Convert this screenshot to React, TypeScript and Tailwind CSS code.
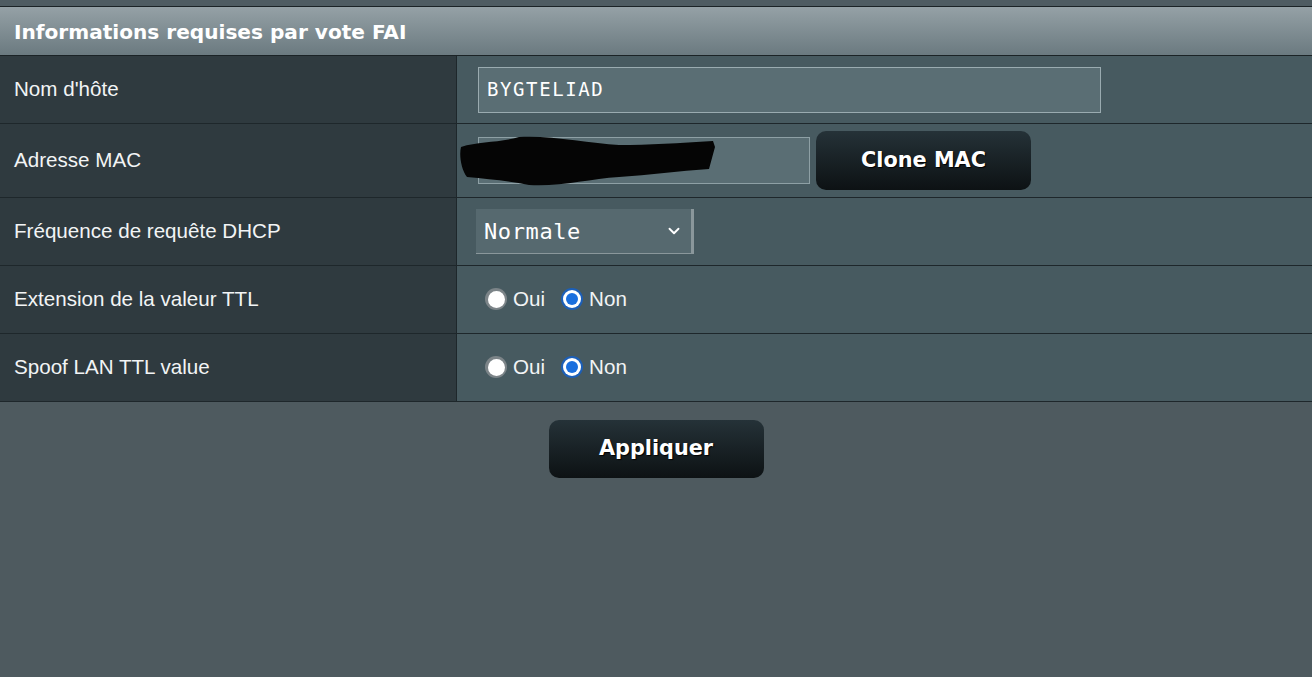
import { ChevronDown } from 'lucide-react'

const label = "font-['Liberation_Sans',Arial,sans-serif] text-[20.6px] text-[#f2f4f5]"
const btn =
  "flex items-center justify-center rounded-[10px] bg-gradient-to-b from-[#253238] to-[#0d1214] font-['DejaVu_Sans',Verdana,sans-serif] text-[20.8px] font-bold text-white [text-shadow:1px_1px_1px_#000]"

function Radio({ checked, text }: { checked?: boolean; text: string }) {
  return (
    <span className="flex items-center">
      {checked ? (
        <span className="flex h-[22px] w-[22px] items-center justify-center rounded-full bg-[#1c5fb8]">
          <span className="flex h-[18px] w-[18px] items-center justify-center rounded-full bg-white">
            <span className="h-[12px] w-[12px] rounded-full bg-[#1a6fde]" />
          </span>
        </span>
      ) : (
        <span className="flex h-[22px] w-[22px] items-center justify-center rounded-full bg-[#7c8488]">
          <span className="h-[17px] w-[17px] rounded-full bg-white" />
        </span>
      )}
      <span className={`${label} ml-[6px]`}>{text}</span>
    </span>
  )
}

function Row({ title, h, children }: { title: string; h: string; children: React.ReactNode }) {
  return (
    <div className={`flex border-b border-[#1e272b] ${h}`}>
      <div className={`flex w-[457px] shrink-0 items-center border-r border-[#1e272b] bg-[#2f3a3f] pl-[14px] ${label}`}>
        {title}
      </div>
      <div className="flex flex-1 items-center bg-[#475a60]">{children}</div>
    </div>
  )
}

export default function App() {
  return (
    <div className="flex h-[677px] w-full flex-col bg-[#4e5a5f]">
      <div className="h-[7px] shrink-0 border-b border-[#1b2326] bg-[#4f5c62]" />
      <div className="flex h-[49px] shrink-0 items-center border-b border-[#1b2326] bg-gradient-to-b from-[#95a1a6] to-[#6b7a80] pl-[14px]">
        <span className="pt-[2px] font-['DejaVu_Sans',Verdana,sans-serif] text-[20.1px] font-bold text-white">
          Informations requises par vote FAI
        </span>
      </div>

      <Row title="Nom d'hôte" h="h-[68px]">
        <div className="ml-[21px] flex h-[46px] w-[623px] items-center border border-[#9aabb0] bg-[#5a6e74] pl-[8px] font-['DejaVu_Sans_Mono',monospace] text-[19px] tracking-[1.6px] text-white">
          BYGTELIAD
        </div>
      </Row>

      <Row title="Adresse MAC" h="h-[74px]">
        <div className="relative ml-[21px] h-[47px] w-[332px] border border-[#8ea0a5] bg-[#5a6e74]">
          <svg className="absolute left-[-20px] top-[-5px]" width="256" height="58" viewBox="0 0 256 58">
            <path
              d="M2 14 C20 8 40 10 60 4 C90 2 130 10 160 12 C190 12 220 10 254 8 L256 14 L250 36 C220 38 190 42 160 44 C130 46 100 54 70 52 C50 48 30 46 8 44 C2 36 0 22 2 14 Z"
              fill="#050505"
            />
          </svg>
        </div>
        <button className={`${btn} ml-[6px] h-[59px] w-[215px]`}>Clone MAC</button>
      </Row>

      <Row title="Fréquence de requête DHCP" h="h-[68px]">
        <div className="ml-[19px] flex h-[45px] w-[218px] items-center justify-between border-r-[3px] border-b border-[#8a979b] bg-[#56696f] pl-[8px] pr-[8px] font-['DejaVu_Sans_Mono',monospace] text-[22px] tracking-[0.6px] text-white">
          <span>Normale</span>
          <ChevronDown size={18} strokeWidth={2.5} color="#ffffff" />
        </div>
      </Row>

      <Row title="Extension de la valeur TTL" h="h-[68px]">
        <div className="ml-[28px] flex items-center gap-[16px]">
          <Radio text="Oui" />
          <Radio checked text="Non" />
        </div>
      </Row>

      <Row title="Spoof LAN TTL value" h="h-[68px]">
        <div className="ml-[28px] flex items-center gap-[16px]">
          <Radio text="Oui" />
          <Radio checked text="Non" />
        </div>
      </Row>

      <div className="flex justify-center pt-[18px]">
        <button className={`${btn} h-[58px] w-[215px]`}>Appliquer</button>
      </div>
    </div>
  )
}
